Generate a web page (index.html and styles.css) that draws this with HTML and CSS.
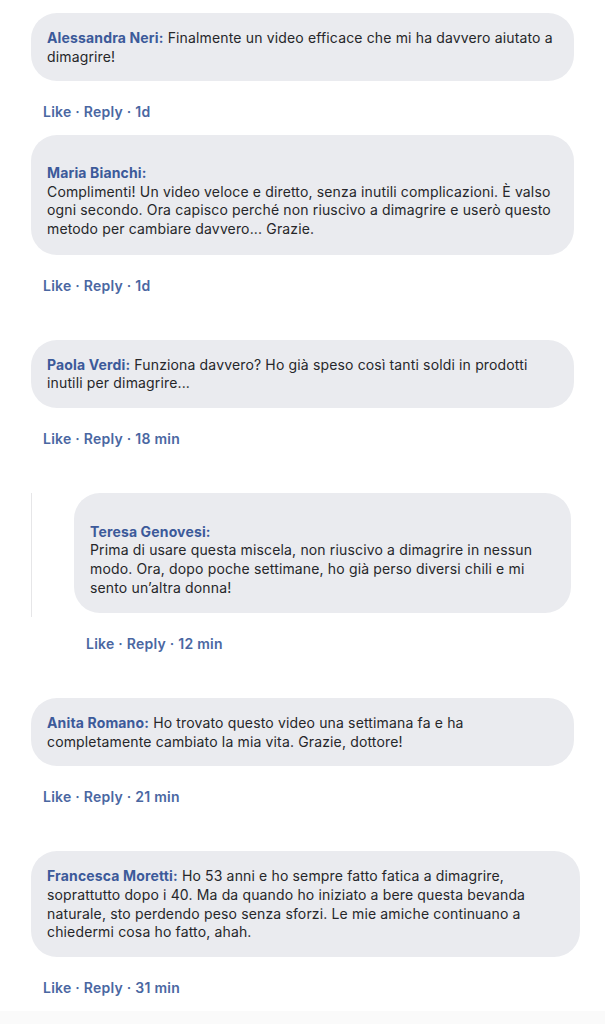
FILE: index.html
```html
<!DOCTYPE html>
<html lang="it">
<head>
<meta charset="utf-8">
<title>Commenti</title>
<link rel="stylesheet" href="styles.css">
</head>
<body>
<main class="feed">
  <article class="comment comment--first">
    <p class="bubble"><span class="name">Alessandra Neri:</span> Finalmente un video efficace che mi ha davvero aiutato a dimagrire!</p>
    <div class="actions">Like · Reply · 1d</div>
  </article>

  <article class="comment">
    <p class="bubble bubble--stacked"><span class="name">Maria Bianchi:</span><br>Complimenti! Un video veloce e diretto, senza inutili complicazioni. È valso ogni secondo. Ora capisco perché non riuscivo a dimagrire e userò questo metodo per cambiare davvero... Grazie.</p>
    <div class="actions">Like · Reply · 1d</div>
  </article>

  <article class="comment">
    <p class="bubble"><span class="name">Paola Verdi:</span> Funziona davvero? Ho già speso così tanti soldi in prodotti inutili per dimagrire...</p>
    <div class="actions">Like · Reply · 18 min</div>
  </article>

  <article class="comment comment--reply">
    <div class="thread">
      <p class="bubble bubble--stacked bubble--reply"><span class="name">Teresa Genovesi:</span><br>Prima di usare questa miscela, non riuscivo a dimagrire in nessun modo. Ora, dopo poche settimane, ho già perso diversi chili e mi sento un’altra donna!</p>
    </div>
    <div class="actions actions--reply">Like · Reply · 12 min</div>
  </article>

  <article class="comment">
    <p class="bubble"><span class="name">Anita Romano:</span> Ho trovato questo video una settimana fa e ha completamente cambiato la mia vita. Grazie, dottore!</p>
    <div class="actions">Like · Reply · 21 min</div>
  </article>

  <article class="comment">
    <p class="bubble bubble--wide"><span class="name">Francesca Moretti:</span> Ho 53 anni e ho sempre fatto fatica a dimagrire, soprattutto dopo i 40. Ma da quando ho iniziato a bere questa bevanda naturale, sto perdendo peso senza sforzi. Le mie amiche continuano a chiedermi cosa ho fatto, ahah.</p>
    <div class="actions">Like · Reply · 31 min</div>
  </article>
</main>
<div class="footer-band"></div>
</body>
</html>
```

FILE: styles.css
```css
* {
  box-sizing: border-box;
}

html, body {
  margin: 0;
  padding: 0;
  background: #ffffff;
}

body {
  font-family: Inter, "Open Sans", "Noto Sans", sans-serif;
  color: #26272a;
  font-size: 14px;
  letter-spacing: 0.15px;
  min-height: 1024px;
  display: flex;
  flex-direction: column;
}

.feed {
  padding: 13px 31px 0 31px;
  display: flex;
  flex-direction: column;
}

.comment {
  display: flex;
  flex-direction: column;
  margin-top: 45px;
}

.comment--first {
  margin-top: 0;
}

.comment--first + .comment {
  margin-top: 14px;
}

.bubble {
  margin: 0;
  background: #eaebef;
  border-radius: 26px;
  padding: 16px 16px 15px 16px;
  line-height: 18.6px;
  font-size: 14px;
  font-weight: 400;
}

.bubble--stacked {
  padding-top: 29px;
  padding-bottom: 16px;
}

.bubble--reply {
  padding-top: 30px;
  padding-bottom: 16px;
}

.bubble--wide {
  margin-right: -6px;
}

.name {
  color: #3c5a9a;
  font-weight: 700;
}

.thread {
  border-left: 1px solid #e6e6e8;
  padding: 0 3px 4px 42px;
}

.actions {
  margin-top: 22px;
  margin-left: 12px;
  line-height: 18px;
  font-size: 14px;
  font-weight: 600;
  letter-spacing: 0.25px;
  color: #4a67a2;
}

.comment--reply .actions--reply {
  margin-top: 18px;
  margin-left: 55px;
}

.footer-band {
  flex: 1;
  margin-top: 14px;
  background: #fafafa;
}
```
